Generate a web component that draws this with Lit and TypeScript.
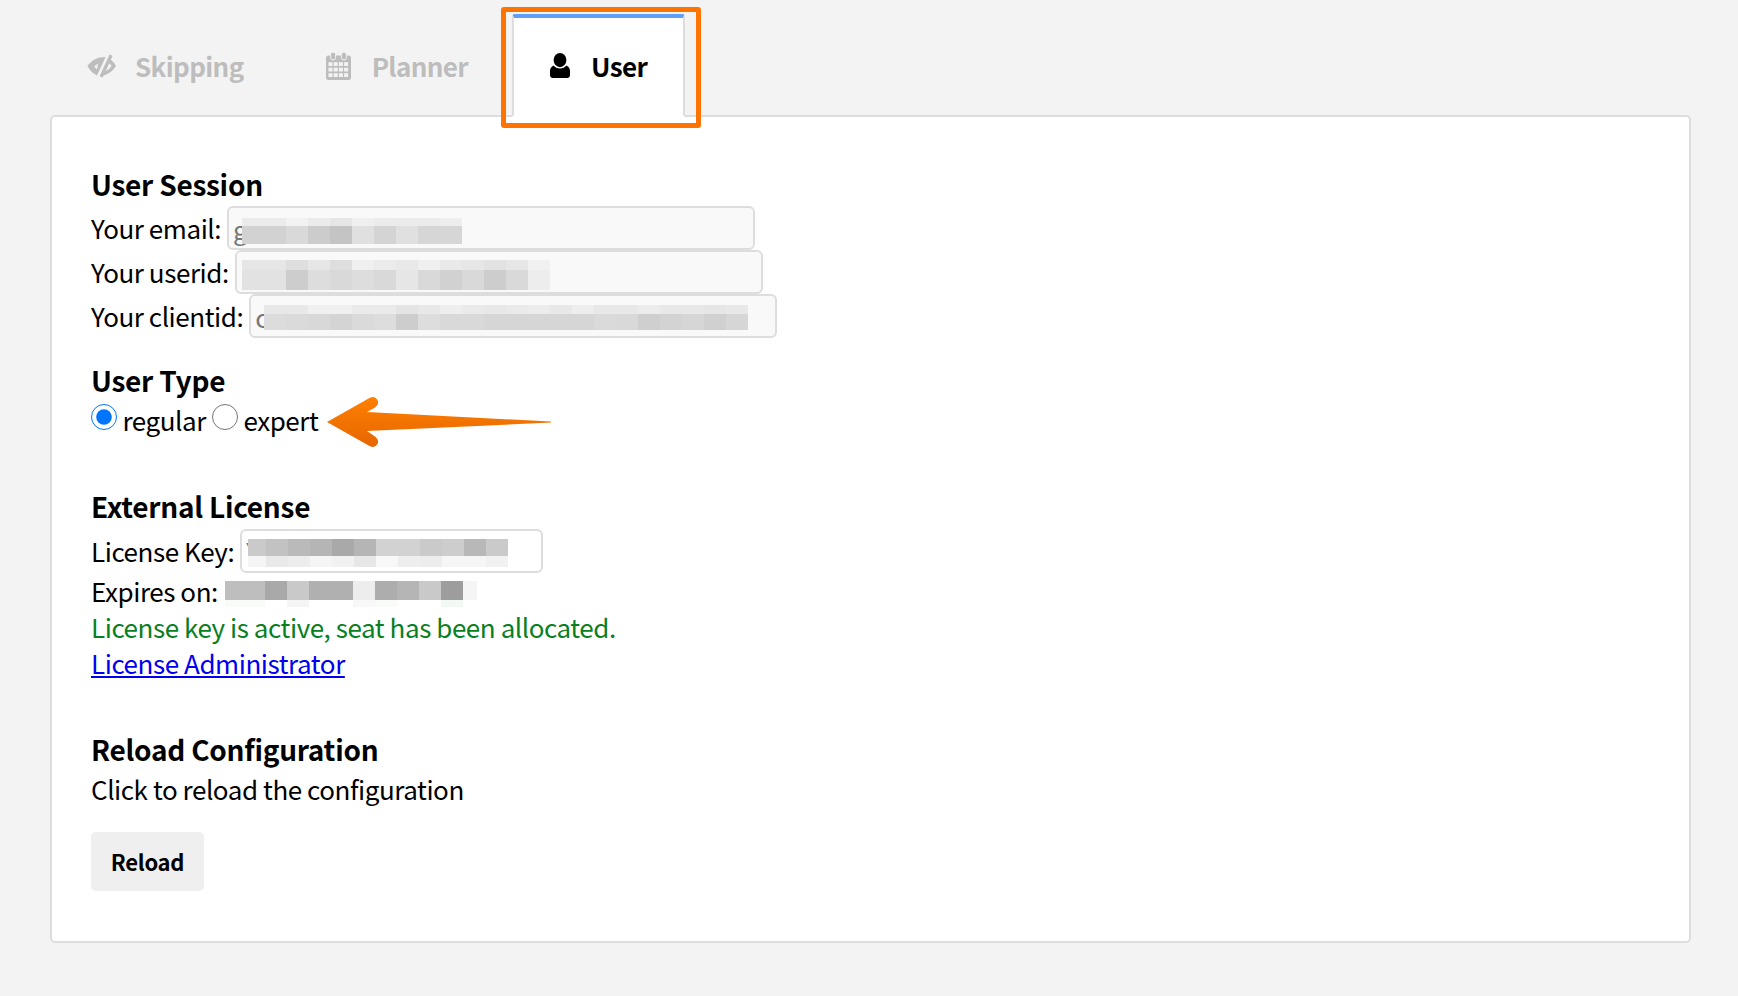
import { LitElement, html, css, svg } from "lit";
import { customElement } from "lit/decorators.js";

interface Mosaic { x: number; y: number; widths: number[]; rows: { h: number; c: string[] }[]; }
const rep = (n: number, w = 22) => Array.from({ length: n }, () => w);
const MOSAICS: Mosaic[] = [
  { x: 242, y: 218, widths: rep(10), rows: [
    { h: 8, c: "ebebeb,ebebeb,f2f2f2,ebebeb,e6e6e6,efefef,ececec,ebebeb,ebebeb,eeeeee".split(",") },
    { h: 18, c: "d2d2d2,d2d2d2,d9d9d9,cccccc,c4c4c4,e0e0e0,d4d4d4,e0e0e0,d6d6d6,d6d6d6".split(",") },
  ] },
  { x: 242, y: 260, widths: rep(14), rows: [
    { h: 10, c: "e6e6e6,e6e6e6,dedede,e6e6e6,dedede,efefef,ebebeb,e8e8e8,efefef,e9e9e9,e6e6e6,e2e2e2,e6e6e6,f1f1f1".split(",") },
    { h: 20, c: "e2e2e2,e2e2e2,cdcdcd,dddddd,d9d9d9,dddddd,d9d9d9,e6e6e6,d9d9d9,d1d1d1,d9d9d9,cdcdcd,d9d9d9,ededed".split(",") },
  ] },
  { x: 264, y: 305, widths: rep(22), rows: [
    { h: 9, c: "e8e8e8,e8e8e8,f0f0f0,f0f0f0,eaeaea,eaeaea,e4e4e4,e8e8e8,eeeeee,eaeaea,e8e8e8,eaeaea,ececec,e8e8e8,eeeeee,e8e8e8,e8e8e8,ececec,e8e8e8,e8e8e8,e6e6e6,e8e8e8".split(",") },
    { h: 16, c: "dcdcdc,dadada,d8d8d8,d4d4d4,dadada,dddddd,cdcdcd,dddddd,d9d9d9,d9d9d9,d6d6d6,d6d6d6,d6d6d6,d6d6d6,d6d6d6,dadada,d9d9d9,cfcfcf,d3d3d3,d6d6d6,d0d0d0,d6d6d6".split(",") },
  ] },
  { x: 248, y: 539, widths: [18, ...rep(11)], rows: [
    { h: 17, c: "cacaca,c2c2c2,bababa,b5b5b5,a9a9a9,b5b5b5,d2d2d2,d2d2d2,cacaca,cdcdcd,b8b8b8,cacaca".split(",") },
    { h: 11, c: "f5f5f5,e9e9e9,ededed,f5f5f5,f1f1f1,e7e7e7,f8f8f8,eeeeee,ededed,f6f6f6,f6f6f6,f1f1f1".split(",") },
  ] },
  { x: 225, y: 581, widths: [18, ...rep(10), 14], rows: [
    { h: 19, c: "bebebe,bebebe,a9a9a9,c9c9c9,b0b0b0,b0b0b0,ededed,adadad,b5b5b5,c9c9c9,9d9d9d,f5f5f5".split(",") },
    { h: 7, c: "f8fbf8,f8fbf8,ffffff,f5f5f5,ffffff,ffffff,f8f8f8,f8fbf8,ffffff,ffffff,f2f8f2,ffffff".split(",") },
  ] },
];

const ICON_EYE = svg`
  <path fill-rule="evenodd" d="M0.4 12 C4.5 6.2 10.8 3 18.6 3 L10 21.4 C6 19.6 2.8 16.4 0.4 12 Z M12 9.4 C10 10 8.4 11 7.2 12.4 C8 13.6 9 14.6 9.8 15.2 L10.6 13.4 C10.2 12 10.8 10.4 12 9.4 Z"/>
  <path d="M22.6 0.4 L25.6 1.8 L15.6 23.6 L12.6 22.2 Z"/>
  <path d="M23.4 5.6 C25.6 7.2 27.6 9.4 29 12 C25.2 17.8 20.2 21.2 14.4 21.8 L16.2 17.8 C19.6 17 22.6 15 24.6 12 C23.8 10.8 22.8 9.8 21.6 9 Z"/>
  <path d="M20.4 10 C21 12.2 20.2 14.4 18 15.6 Z"/>`;
const ICON_USER = svg`
  <ellipse cx="10" cy="7.1" rx="6.4" ry="7.1"/>
  <path d="M3.6 12.6 C5.2 14.6 7.4 15.6 10 15.6 S14.8 14.6 16.4 12.6 C18.8 13.6 20 15.6 20 18.2 V22.2 C20 23.8 18.8 25 17.2 25 H2.8 C1.2 25 0 23.8 0 22.2 V18.2 C0 15.6 1.2 13.6 3.6 12.6 Z"/>`;

function calendar() {
  const cells = [];
  for (let r = 0; r < 3; r++) for (let c = 0; c < 4; c++) {
    cells.push(svg`<rect x=${2.5 + c * 5.2} y=${10.2 + r * 5.5} width="4" height="3.8"/>`);
  }
  return html`<svg class="cal" viewBox="0 0 25 28" width="25" height="28" aria-hidden="true">
    <rect x="0" y="3.5" width="25" height="24.5" rx="2.5" fill="currentColor"/>
    <rect x="4.6" y="0" width="5" height="8" rx="2.5" fill="currentColor" stroke="#f3f3f3" stroke-width="1"/>
    <rect x="15.4" y="0" width="5" height="8" rx="2.5" fill="currentColor" stroke="#f3f3f3" stroke-width="1"/>
    <g fill="#f3f3f3">${cells}</g>
  </svg>`;
}

@customElement("app-root")
export class AppRoot extends LitElement {
  static styles = css`
    :host {
      display: block;
      position: relative;
      min-height: 996px;
      background: #f3f3f3;
      font-family: "Noto Sans CJK JP", "Noto Sans", sans-serif;
      font-size: 26px;
      letter-spacing: -0.44px;
      line-height: 36px;
      color: #000;
      overflow: hidden;
    }
    .tabs { display: flex; gap: 4px; padding: 14px 0 0 49px; height: 117px; box-sizing: border-box; position: relative; z-index: 1; margin-bottom: -2px; }
    .tab {
      display: flex; align-items: center; gap: 21px;
      padding: 0 38px 2px 36px; height: 103px; box-sizing: border-box;
      font-weight: 700; color: #bdbdbd; font-size: 26px; letter-spacing: -0.6px;
      border: 2px solid transparent; border-top-width: 4px;
    }
    .tab.skip { gap: 19px; }
    .tab.active {
      background: #fff; color: #000;
      border-color: #ddd; border-top-color: #5f9ff5; border-bottom-color: #fff;
      border-radius: 3px 3px 0 0;
      padding-right: 36px;
    }
    .tab svg { fill: currentColor; display: block; flex: none; }
    .panel {
      margin: 0 47px 0 50px;
      background: #fff; border: 2px solid #ddd; border-radius: 5px;
      padding: 49px 39px 50px;
    }
    h2 { margin: 0; font-size: 28px; letter-spacing: -0.25px; line-height: 36px; font-weight: 700; }
    .row { display: flex; align-items: center; height: 44px; gap: 6px; white-space: nowrap; }
    .rows { margin-top: 4px; }
    .inp {
      box-sizing: border-box; width: 528px; height: 44px; padding: 0 4px;
      border: 2px solid #ddd; border-radius: 6px; background: #f9f9f9; outline: none;
      font: inherit; color: #777; flex: none;
    }
    .inp.lic { width: 303px; background: #fff; }
    .sec-type { margin-top: 24px; }
    .radios { display: flex; align-items: center; height: 36px; margin-top: 4px; white-space: nowrap; }
    .radios input { width: 26px; height: 26px; margin: 0; flex: none; position: relative; top: -3px; }
    .radios label { margin: 0 6px 0 5.5px; }
    .sec-lic { margin-top: 50px; }
    .line { height: 36px; white-space: nowrap; }
    .rows-lic { margin-top: 4px; }
    .rows-lic .row { height: 45px; }
    .ok { color: #08801f; }
    a { color: #0000ee; text-decoration: underline; }
    .sec-reload { margin-top: 50px; }
    .desc { margin-top: 4px; }
    button {
      display: block; margin: 25px 0 0; width: 113px; height: 59px; padding: 0 0 2px;
      border: none; border-radius: 5px; background: #efefef; color: #000;
      font: inherit; font-size: 22px; letter-spacing: -0.3px; font-weight: 700;
    }
    .mosaic { position: absolute; z-index: 2; pointer-events: none; }
    .m-row { display: flex; }
    .m-cell { flex: none; height: 100%; }
    .highlight {
      position: absolute; z-index: 3; left: 501px; top: 7px; width: 200px; height: 121px;
      box-sizing: border-box; border: 5.5px solid #ff7300; border-radius: 3px; pointer-events: none;
    }
    .arrow { position: absolute; z-index: 3; left: 320px; top: 390px; }
  `;

  private renderMosaic(m: Mosaic) {
    return html`<div class="mosaic" style="left:${m.x}px;top:${m.y}px">
      ${m.rows.map((r) => html`<div class="m-row" style="height:${r.h}px">
        ${r.c.map((col, i) => html`<div class="m-cell" style="width:${m.widths[i]}px;background:#${col}"></div>`)}
      </div>`)}
    </div>`;
  }

  render() {
    return html`
      <nav class="tabs">
        <div class="tab skip">
          <svg viewBox="0 0 29 24" width="29" height="24" aria-hidden="true">${ICON_EYE}</svg>
          <span>Skipping</span>
        </div>
        <div class="tab">${calendar()}<span>Planner</span></div>
        <div class="tab active">
          <svg viewBox="0 0 20 25" width="20" height="25" aria-hidden="true">${ICON_USER}</svg>
          <span>User</span>
        </div>
      </nav>
      <main class="panel">
        <section>
          <h2>User Session</h2>
          <div class="rows">
            <div class="row"><span>Your email:</span><input class="inp" readonly .value=${"g"} /></div>
            <div class="row"><span>Your userid:</span><input class="inp" readonly /></div>
            <div class="row"><span>Your clientid:</span><input class="inp" readonly .value=${"c"} /></div>
          </div>
        </section>
        <section class="sec-type">
          <h2>User Type</h2>
          <div class="radios">
            <input type="radio" name="utype" id="r1" checked /><label for="r1">regular</label>
            <input type="radio" name="utype" id="r2" /><label for="r2">expert</label>
          </div>
        </section>
        <section class="sec-lic">
          <h2>External License</h2>
          <div class="rows-lic">
            <div class="row"><span>License Key:</span><input class="inp lic" readonly .value=${"Y"} /></div>
            <div class="line">Expires on: </div>
            <div class="line ok">License key is active, seat has been allocated.</div>
            <div class="line"><a href="#">License Administrator</a></div>
          </div>
        </section>
        <section class="sec-reload">
          <h2>Reload Configuration</h2>
          <div class="line desc">Click to reload the configuration</div>
          <button>Reload</button>
        </section>
      </main>
      ${MOSAICS.map((m) => this.renderMosaic(m))}
      <div class="highlight"></div>
      <svg class="arrow" width="240" height="64" viewBox="320 390 240 64" aria-hidden="true">
        <defs>
          <linearGradient id="ag" x1="0" y1="0" x2="0" y2="1">
            <stop offset="0" stop-color="#ff8000"/>
            <stop offset="1" stop-color="#e66600"/>
          </linearGradient>
        </defs>
        <path fill="url(#ag)" d="M327 422 L369.5 398 Q375 395.5 377.5 400 Q379.5 404.5 375 407.5 L367 412 L551 421.5 L551 422.5 L367 431 L375 436.5 Q379.5 440 377.5 444 Q375 448.5 369.5 446 Z"/>
      </svg>
    `;
  }
}
